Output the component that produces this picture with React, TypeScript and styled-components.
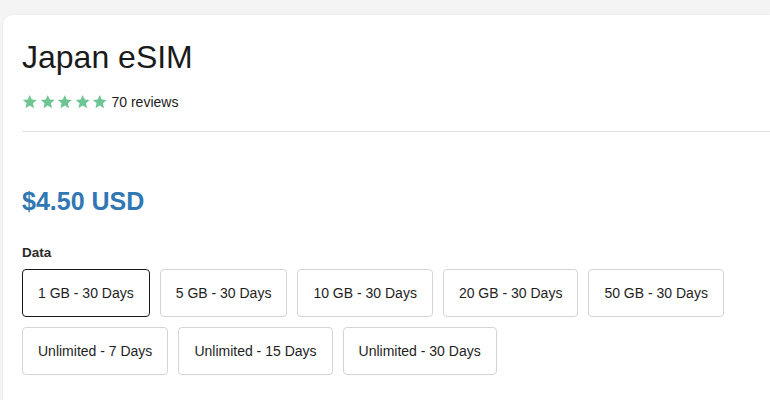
import { useState } from "react";
import styled, { createGlobalStyle } from "styled-components";

const GlobalStyle = createGlobalStyle`
  html, body {
    margin: 0;
    padding: 0;
    background: #f4f4f4;
    font-family: "Liberation Sans", Arial, sans-serif;
    color: #1c1c1c;
    overflow: hidden;
  }
`;

const Page = styled.div`
  width: 770px;
  height: 400px;
  padding: 15px 0 0 3px;
  box-sizing: border-box;
  overflow: hidden;
`;

const Card = styled.section`
  background: #ffffff;
  border-radius: 10px 0 0 0;
  box-shadow: 0 0 3px rgba(0, 0, 0, 0.06);
  padding: 22px 0 40px 19px;
  min-height: 420px;
  box-sizing: border-box;
`;

const Title = styled.h1`
  margin: 0;
  font-size: 32px;
  font-weight: 400;
  line-height: 40px;
  color: #1a1a1a;
`;

const Rating = styled.div`
  display: flex;
  align-items: center;
  gap: 4px;
  margin-top: 16px;
  font-size: 14px;
  line-height: 18px;
`;

const Stars = styled.div`
  display: flex;
  gap: 2px;
`;

const Divider = styled.hr`
  border: none;
  border-top: 1px solid #e3e3e3;
  margin: 20px 0 0;
`;

const Price = styled.div`
  margin-top: 55px;
  font-size: 25px;
  font-weight: 700;
  line-height: 28px;
  color: #3077b4;
`;

const Label = styled.div`
  margin-top: 29px;
  font-size: 13.5px;
  font-weight: 700;
  line-height: 18px;
  color: #2a2a2a;
`;

const Options = styled.div`
  display: flex;
  flex-wrap: wrap;
  gap: 10px;
  margin-top: 7px;
  width: 720px;
`;

const Option = styled.button<{ $active?: boolean }>`
  height: 48px;
  padding: 0 15px;
  font-family: inherit;
  font-size: 14px;
  color: #1e1e1e;
  background: #fff;
  border-radius: 4px;
  border: ${({ $active }) => ($active ? "1.5px solid #1a1a1a" : "1px solid #d4d4d4")};
  cursor: pointer;
  white-space: nowrap;
`;

const Star = () => (
  <svg width="15.5" height="15.5" viewBox="0 0 24 24">
    <path
      fill="#6cc592"
      d="M12 1.5l3.1 7.1 7.6.7-5.8 5.1 1.7 7.5L12 17.9l-6.6 4 1.7-7.5L1.3 9.3l7.6-.7z"
    />
  </svg>
);

const plans = [
  "1 GB - 30 Days",
  "5 GB - 30 Days",
  "10 GB - 30 Days",
  "20 GB - 30 Days",
  "50 GB - 30 Days",
  "Unlimited - 7 Days",
  "Unlimited - 15 Days",
  "Unlimited - 30 Days",
];

export default function App() {
  const [selected, setSelected] = useState(0);

  return (
    <>
      <GlobalStyle />
      <Page>
        <Card>
          <Title>Japan eSIM</Title>
          <Rating>
            <Stars>
              {[0, 1, 2, 3, 4].map((i) => (
                <Star key={i} />
              ))}
            </Stars>
            <span>70 reviews</span>
          </Rating>
          <Divider />
          <Price>$4.50 USD</Price>
          <Label>Data</Label>
          <Options>
            {plans.map((plan, i) => (
              <Option key={plan} $active={i === selected} onClick={() => setSelected(i)}>
                {plan}
              </Option>
            ))}
          </Options>
        </Card>
      </Page>
    </>
  );
}
